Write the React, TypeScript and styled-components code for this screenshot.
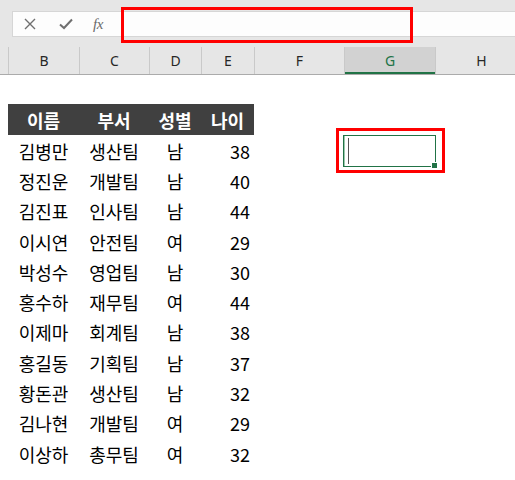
import React from 'react'
import styled, { createGlobalStyle } from 'styled-components'

const GlobalStyle = createGlobalStyle`
  html, body {
    margin: 0;
    padding: 0;
    background: #ffffff;
  }
`

const COLUMNS = '8px 71px 70px 52px 53px 90px 91px 92px'
const GREEN = '#217346'
const RED = '#ff0000'

const Screen = styled.div`
  width: 515px;
  height: 480px;
  overflow: hidden;
  background: #ffffff;
  font-family: 'Noto Sans CJK KR', 'Noto Sans', sans-serif;
`

const Ribbon = styled.div`
  background: #e6e6e6;
  padding: 11px 0 10px 12px;
`

const FormulaBar = styled.div`
  display: flex;
  height: 26px;
  background: #fdfdfd;
  border-top: 1px solid #d6d6d6;
  border-bottom: 1px solid #d6d6d6;
  border-left: 1px solid #d6d6d6;
  box-sizing: border-box;
`

const FormulaButtons = styled.div`
  display: flex;
  align-items: center;
  box-sizing: border-box;
  width: 109px;
  padding-left: 8px;
  gap: 18px;
  color: #6f6f6f;
`

const IconSlot = styled.span`
  display: inline-flex;
  align-items: center;
  justify-content: center;
  width: 18px;
  height: 18px;
`

const Fx = styled.span`
  font-family: 'Liberation Serif', serif;
  font-style: italic;
  font-size: 15px;
  color: #6a6a6a;
  letter-spacing: -0.5px;
`

const FormulaInput = styled.div`
  position: relative;
  flex: 1;
  border-left: 1px solid #c6c6c6;
`

const FormulaHighlight = styled.div`
  position: absolute;
  left: -2px;
  top: -5px;
  width: 292px;
  height: 36px;
  border: 3px solid ${RED};
  box-sizing: border-box;
`

const SheetRow = styled.div<{ $h: number }>`
  display: grid;
  grid-template-columns: ${COLUMNS};
  height: ${(p) => p.$h}px;
`

const HeaderRow = styled(SheetRow)`
  background: #e6e6e6;
  border-bottom: 1px solid #ababab;
  box-sizing: border-box;
`

const ColHead = styled.div<{ $active?: boolean }>`
  display: flex;
  align-items: center;
  justify-content: center;
  border-left: 1px solid #c9c9c9;
  font-family: 'Noto Sans', sans-serif;
  font-size: 14px;
  color: ${(p) => (p.$active ? GREEN : '#262626')};
  background: ${(p) => (p.$active ? '#d2d2d2' : 'transparent')};
  box-shadow: ${(p) => (p.$active ? `inset 0 -2px 0 ${GREEN}` : 'none')};
  &:first-child {
    border-left: none;
  }
`

const Cell = styled.div<{ $align?: 'left' | 'center' | 'right'; $head?: boolean }>`
  position: relative;
  display: flex;
  align-items: center;
  justify-content: ${(p) =>
    p.$align === 'right' ? 'flex-end' : p.$align === 'left' ? 'flex-start' : 'center'};
  padding: ${(p) => (p.$align === 'right' ? '1px 4px 0 0' : '1px 0 0 0')};
  font-size: 18px;
  font-weight: ${(p) => (p.$head ? 700 : 400)};
  color: ${(p) => (p.$head ? '#ffffff' : '#000000')};
  background: ${(p) => (p.$head ? '#404040' : 'transparent')};
  white-space: nowrap;
`

const SelectedCell = styled.div`
  position: relative;
  border: 1px solid ${GREEN};
  margin: 0 -1px -2px -1px;
  box-shadow: inset 1px 0 0 #9cc7ad;
`

const Caret = styled.span`
  position: absolute;
  left: 4px;
  top: 2px;
  bottom: 2px;
  width: 1px;
  background: #555555;
`

const FillHandle = styled.span`
  position: absolute;
  right: -3px;
  bottom: -3px;
  width: 5px;
  height: 5px;
  background: ${GREEN};
  border: 1px solid #ffffff;
`

const CellHighlight = styled.div`
  position: absolute;
  left: -8px;
  right: -10px;
  top: -8px;
  bottom: -7px;
  border: 3px solid ${RED};
`

const LETTERS = ['', 'B', 'C', 'D', 'E', 'F', 'G', 'H']

const PEOPLE = [
  ['김병만', '생산팀', '남', 38],
  ['정진운', '개발팀', '남', 40],
  ['김진표', '인사팀', '남', 44],
  ['이시연', '안전팀', '여', 29],
  ['박성수', '영업팀', '남', 30],
  ['홍수하', '재무팀', '여', 44],
  ['이제마', '회계팀', '남', 38],
  ['홍길동', '기획팀', '남', 37],
  ['황돈관', '생산팀', '남', 32],
  ['김나현', '개발팀', '여', 29],
  ['이상하', '총무팀', '여', 32],
] as const

const App: React.FC = () => {
  return (
    <Screen>
      <GlobalStyle />
      <Ribbon>
        <FormulaBar>
          <FormulaButtons>
            <IconSlot>
              <svg width="12" height="12" viewBox="0 0 12 12">
                <path d="M1 1 L11 11 M11 1 L1 11" stroke="#6f6f6f" strokeWidth="1.4" />
              </svg>
            </IconSlot>
            <IconSlot>
              <svg width="14" height="12" viewBox="0 0 14 12">
                <path d="M1 6.5 L5 10 L13 1.5" stroke="#6f6f6f" strokeWidth="2" fill="none" />
              </svg>
            </IconSlot>
            <Fx>fx</Fx>
          </FormulaButtons>
          <FormulaInput>
            <FormulaHighlight />
          </FormulaInput>
        </FormulaBar>
      </Ribbon>

      <HeaderRow $h={28}>
        {LETTERS.map((l, i) => (
          <ColHead key={i} $active={l === 'G'}>
            {l}
          </ColHead>
        ))}
      </HeaderRow>

      <SheetRow $h={29} />

      <SheetRow $h={31}>
        <div />
        <Cell $head>이름</Cell>
        <Cell $head>부서</Cell>
        <Cell $head>성별</Cell>
        <Cell $head>나이</Cell>
      </SheetRow>

      {PEOPLE.map(([name, dept, sex, age], i) => (
        <SheetRow key={name} $h={30.3}>
          <div />
          <Cell>{name}</Cell>
          <Cell>{dept}</Cell>
          <Cell>{sex}</Cell>
          <Cell $align="right">{age}</Cell>
          <div />
          {i === 0 ? (
            <SelectedCell>
              <Caret />
              <FillHandle />
              <CellHighlight />
            </SelectedCell>
          ) : (
            <div />
          )}
        </SheetRow>
      ))}
    </Screen>
  )
}

export default App
